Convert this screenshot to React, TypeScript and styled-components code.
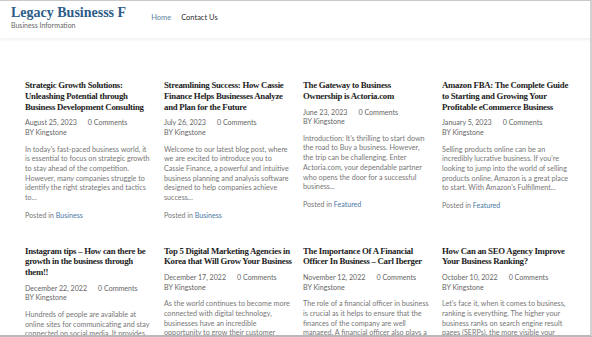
import styled, { createGlobalStyle } from 'styled-components';

const GlobalStyle = createGlobalStyle`
  html, body {
    margin: 0;
    padding: 0;
    background: #ffffff;
  }
  body {
    font-family: Lato, "Open Sans", sans-serif;
  }
`;

const Page = styled.div`
  width: 592px;
  height: 337px;
  box-sizing: border-box;
  overflow: hidden;
  border-top: 1px solid #c9c9c9;
  border-right: 2px solid #d2d2d2;
  border-bottom: 2px solid #b9b9b9;
  background: #fff;
`;

const Header = styled.header`
  height: 37px;
  display: flex;
  align-items: flex-start;
  padding: 0 0 0 11px;
  box-shadow: 0 2px 3px rgba(0, 0, 0, 0.06);
`;

const Brand = styled.div`
  display: flex;
  flex-direction: column;
  padding-top: 3px;
`;

const SiteTitle = styled.a`
  font-family: "Liberation Serif", serif;
  font-weight: bold;
  font-size: 14px;
  line-height: 17px;
  color: #2c5d88;
  text-decoration: none;
`;

const Tagline = styled.span`
  font-size: 7px;
  line-height: 9px;
  color: #666;
`;

const Nav = styled.nav`
  display: flex;
  gap: 10px;
  margin-left: 25px;
  padding-top: 12px;
`;

const NavLink = styled.a<{ $active?: boolean }>`
  font-size: 7.5px;
  line-height: 10px;
  color: ${(p) => (p.$active ? '#5d7f9f' : '#2b2b2b')};
  text-decoration: none;
`;

const Posts = styled.main`
  display: grid;
  grid-template-columns: repeat(4, 128px);
  column-gap: 11px;
  row-gap: 25px;
  padding: 42px 0 0 25px;
`;

const Card = styled.article`
  display: flex;
  flex-direction: column;
`;

const Title = styled.h2`
  margin: 0 0 6px;
  font-family: "Liberation Serif", serif;
  font-weight: bold;
  font-size: 8.75px;
  letter-spacing: -0.25px;
  line-height: 10.8px;
  color: #1c1c1c;
`;

const Meta = styled.div`
  font-size: 7.1px;
  line-height: 9.6px;
  color: #666;
`;

const Comments = styled.span`
  margin-left: 11px;
`;

const Excerpt = styled.p`
  margin: 7px 0 8px;
  padding-right: 1px;
  font-size: 7.2px;
  line-height: 9.7px;
  color: #777;
`;

const Category = styled.div`
  font-size: 7.1px;
  line-height: 9.7px;
  color: #777;

  a {
    color: #4b79a6;
    text-decoration: none;
  }
`;

type Post = {
  title: string;
  date: string;
  excerpt: string;
  category: string;
};

const posts: Post[] = [
  {
    title: 'Strategic Growth Solutions: Unleashing Potential through Business Development Consulting',
    date: 'August 25, 2023',
    excerpt:
      "In today's fast-paced business world, it is essential to focus on strategic growth to stay ahead of the competition. However, many companies struggle to identify the right strategies and tactics to...",
    category: 'Business',
  },
  {
    title: 'Streamlining Success: How Cassie Finance Helps Businesses Analyze and Plan for the Future',
    date: 'July 26, 2023',
    excerpt:
      'Welcome to our latest blog post, where we are excited to introduce you to Cassie Finance, a powerful and intuitive business planning and analysis software designed to help companies achieve success...',
    category: 'Business',
  },
  {
    title: 'The Gateway to Business Ownership is Actoria.com',
    date: 'June 23, 2023',
    excerpt:
      "Introduction: It's thrilling to start down the road to Buy a business. However, the trip can be challenging. Enter Actoria.com, your dependable partner who opens the door for a successful business...",
    category: 'Featured',
  },
  {
    title: 'Amazon FBA: The Complete Guide to Starting and Growing Your Profitable eCommerce Business',
    date: 'January 5, 2023',
    excerpt:
      "Selling products online can be an incredibly lucrative business. If you're looking to jump into the world of selling products online, Amazon is a great place to start. With Amazon's Fulfillment...",
    category: 'Featured',
  },
  {
    title: 'Instagram tips – How can there be growth in the business through them!!',
    date: 'December 22, 2022',
    excerpt:
      'Hundreds of people are available at online sites for communicating and stay connected on social media. It provides an opportunity for businesses to reach...',
    category: 'Business',
  },
  {
    title: 'Top 5 Digital Marketing Agencies in Korea that Will Grow Your Business',
    date: 'December 17, 2022',
    excerpt:
      'As the world continues to become more connected with digital technology, businesses have an incredible opportunity to grow their customer base and...',
    category: 'Business',
  },
  {
    title: 'The Importance Of A Financial Officer In Business – Carl Iberger',
    date: 'November 12, 2022',
    excerpt:
      'The role of a financial officer in business is crucial as it helps to ensure that the finances of the company are well managed. A financial officer also plays a key role...',
    category: 'Business',
  },
  {
    title: 'How Can an SEO Agency Improve Your Business Ranking?',
    date: 'October 10, 2022',
    excerpt:
      "Let's face it, when it comes to business, ranking is everything. The higher your business ranks on search engine result pages (SERPs), the more visible your business...",
    category: 'Business',
  },
];

const App: React.FC = () => {
  return (
    <>
      <GlobalStyle />
      <Page>
        <Header>
          <Brand>
            <SiteTitle href="#">Legacy Businesss F</SiteTitle>
            <Tagline>Business Information</Tagline>
          </Brand>
          <Nav>
            <NavLink href="#" $active>Home</NavLink>
            <NavLink href="#">Contact Us</NavLink>
          </Nav>
        </Header>
        <Posts>
          {posts.map((post) => (
            <Card key={post.title}>
              <Title>{post.title}</Title>
              <Meta>
                {post.date}
                <Comments>0 Comments</Comments>
              </Meta>
              <Meta>BY Kingstone</Meta>
              <Excerpt>{post.excerpt}</Excerpt>
              <Category>
                Posted in <a href="#">{post.category}</a>
              </Category>
            </Card>
          ))}
        </Posts>
      </Page>
    </>
  );
};

export default App;
